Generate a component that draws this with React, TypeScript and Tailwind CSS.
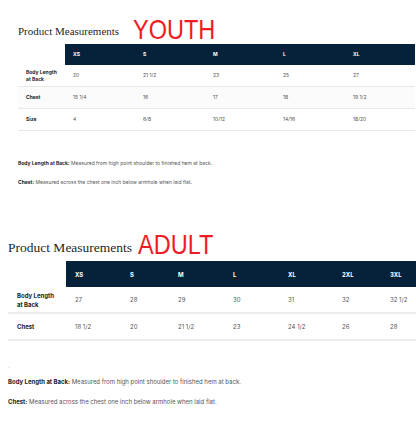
import React from 'react'

const youthSizes = ['XS', 'S', 'M', 'L', 'XL']
const youthRows = [
    { label: ['Body Length', 'at Back'], values: ['20', '21 1/2', '23', '25', '27'] },
    { label: ['Chest'], values: ['15 1/4', '16', '17', '18', '19 1/2'], shaded: true },
    { label: ['Size'], values: ['4', '6/8', '10/12', '14/16', '18/20'] },
]

const adultSizes = ['XS', 'S', 'M', 'L', 'XL', '2XL', '3XL']
const adultWidths = ['w-[55px]', 'w-[48px]', 'w-[55px]', 'w-[55px]', 'w-[54px]', 'w-[48px]', 'w-[50px]']
const adultRows = [
    { label: ['Body Length', 'at Back'], values: ['27', '28', '29', '30', '31', '32', '32 1/2'] },
    { label: ['Chest'], values: ['18 1/2', '20', '21 1/2', '23', '24 1/2', '26', '28'] },
]

function YouthTable() {
    return (
        <div className="ml-[18px] w-[397px] font-['Inter',sans-serif]">
            {/* header */}
            <div className="flex h-[21px]">
                <div className="w-[47px]" />
                <div className="flex flex-1 items-center bg-[#05223a]">
                    {youthSizes.map((s) => (
                        <div key={s} className="w-[70px] pl-[8px] text-[5px] font-bold text-white">
                            {s}
                        </div>
                    ))}
                </div>
            </div>
            {youthRows.map((row) => (
                <div
                    key={row.label[0]}
                    className={`flex h-[22px] items-center border-b border-[#e8e8e8] ${row.shaded ? 'bg-[#fbfbfb]' : ''}`}
                >
                    <div className="w-[47px] pl-[8px] text-[5px] font-bold leading-[7px] text-[#222]">
                        {row.label.map((l) => (
                            <div key={l}>{l}</div>
                        ))}
                    </div>
                    {row.values.map((v, i) => (
                        <div key={i} className="w-[70px] pl-[8px] text-[5px] text-[#555]">
                            {v}
                        </div>
                    ))}
                </div>
            ))}
        </div>
    )
}

function AdultTable() {
    return (
        <div className="ml-[8px] w-[430px] font-['Inter',sans-serif]">
            <div className="flex h-[26px]">
                <div className="w-[58px]" />
                <div className="flex flex-1 items-center bg-[#05223a]">
                    {adultSizes.map((s, i) => (
                        <div key={s} className={`${adultWidths[i]} pl-[9px] text-[6px] font-bold text-white`}>
                            {s}
                        </div>
                    ))}
                </div>
            </div>
            {adultRows.map((row) => (
                <div key={row.label[0]} className="flex h-[27px] items-center border-b-2 border-[#ececec]">
                    <div className="w-[58px] pl-[9px] text-[6px] font-bold leading-[9px] text-[#222]">
                        {row.label.map((l) => (
                            <div key={l}>{l}</div>
                        ))}
                    </div>
                    {row.values.map((v, i) => (
                        <div key={i} className={`${adultWidths[i]} pl-[9px] text-[6px] text-[#555]`}>
                            {v}
                        </div>
                    ))}
                </div>
            ))}
        </div>
    )
}

export default function App() {
    return (
        <div className="h-[442px] w-[416px] overflow-hidden bg-white">
            {/* YOUTH */}
            <section className="pt-[19px]">
                <div className="ml-[18px] flex h-[25px] items-start">
                    <h2 className="mt-[4px] font-['Liberation_Serif',serif] text-[11px] text-[#1f1f1f]">
                        Product Measurements
                    </h2>
                    <span className="ml-[14px] origin-left scale-x-[0.84] font-['Liberation_Sans',sans-serif] text-[28px] leading-[22px] text-[#ee1c24]">
                        YOUTH
                    </span>
                </div>
                <YouthTable />
                <div className="ml-[18px] mt-[29px] font-['Inter',sans-serif] text-[5px] text-[#555]">
                    <p>
                        <b className="text-[#222]">Body Length at Back:</b> Measured from high point shoulder to finished hem at back.
                    </p>
                    <p className="mt-[11px]">
                        <b className="text-[#222]">Chest:</b> Measured across the chest one inch below armhole when laid flat.
                    </p>
                </div>
            </section>

            {/* ADULT */}
            <section className="mt-[48px]">
                <div className="ml-[8px] flex h-[27px] items-start">
                    <h2 className="mt-[4px] font-['Liberation_Serif',serif] text-[13.5px] text-[#1f1f1f]">
                        Product Measurements
                    </h2>
                    <span className="ml-[6px] origin-left scale-x-[0.84] font-['Liberation_Sans',sans-serif] text-[28px] leading-[22px] text-[#ee1c24]">
                        ADULT
                    </span>
                </div>
                <AdultTable />
                <div className="ml-[8px] mt-[20px] font-['Inter',sans-serif] text-[6px] text-[#555]">
                    <div className="text-[#999]">.</div>
                    <p className="mt-[7px]">
                        <b className="text-[#222]">Body Length at Back:</b> Measured from high point shoulder to finished hem at back.
                    </p>
                    <p className="mt-[11px]">
                        <b className="text-[#222]">Chest:</b> Measured across the chest one inch below armhole when laid flat.
                    </p>
                </div>
            </section>
        </div>
    )
}
